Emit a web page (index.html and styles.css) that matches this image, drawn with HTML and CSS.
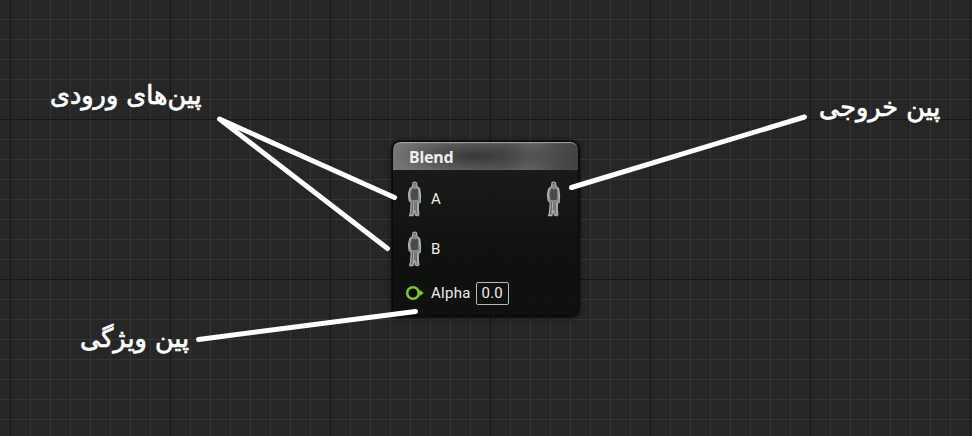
FILE: index.html
```html
<!DOCTYPE html>
<html lang="fa">
<head>
<meta charset="utf-8">
<title>Blend</title>
<link rel="stylesheet" href="styles.css">
</head>
<body>
<main class="graph">
  <svg class="defs" width="0" height="0" aria-hidden="true">
    <symbol id="pose" viewBox="0 0 16 36">
      <path class="body" d="M6 1.5Q8 .3 9.600 1.800L10 5.500 12.700 7.500 13.600 15 13.200 21.500 11.400 22 11.300 28 12 33.500 10.800 34.800 8.200 34 7.800 30 6.600 31.500 5.900 34.600 2.600 34.600 3.500 31 4.200 21.500 2.100 19.500 1.400 13.500 2.800 7.600 5.500 5.600Z"/>
      <path class="torso" d="M5.2 7.5 8 8.5 10.6 7.5 11.2 13 10.8 19H4.6L3.6 13Z"/>
      <path class="fold" d="M6.4 2.7H9M5.6 21 5.2 29 4.5 33M8 21.5 7.5 29M9.7 22 9.5 32"/>
      <path class="shine" d="M5.2 5.9 3 8 2 13.5 3 18.7M10.7 6.4 12.4 9 13 15.5M6.8 21.5 6.2 31M10.5 22 10.3 33"/>
    </symbol>
  </svg>
  <section class="node" dir="ltr">
    <header class="title">Blend</header>
    <div class="pins">
      <div class="row"><svg class="pose"><use href="#pose"/></svg><span>A</span><svg class="pose out"><use href="#pose"/></svg></div>
      <div class="row"><svg class="pose"><use href="#pose"/></svg><span>B</span></div>
      <div class="row value">
        <svg class="ring" viewBox="0 0 20 16"><circle cx="8" cy="8" r="5.8"/><path d="M14.6 4.8 18.7 8 14.6 11.2Z"/></svg>
        <span class="name">Alpha</span><span class="field">0.0</span>
      </div>
    </div>
  </section>
  <svg class="wires" viewBox="0 0 972 436">
    <path d="M394.500 197.500 219.500 119 387.500 248.500M571.500 187.500 804.500 117M198.500 339.500 415.500 311.500"/>
  </svg>
  <div class="note inputs" dir="rtl">پین‌های ورودی</div>
  <div class="note output" dir="rtl">پین خروجی</div>
  <div class="note property" dir="rtl">پین ویژگی</div>
</main>
</body>
</html>
```
FILE: styles.css
```css
* { box-sizing: border-box; }
body { margin: 0; }
.defs { position: absolute; }
.graph {
  position: relative;
  width: 972px;
  height: 436px;
  overflow: hidden;
  background-color: #262626;
  background-image:
    linear-gradient(90deg, #161616 1px, transparent 1px),
    linear-gradient(#161616 1px, transparent 1px),
    linear-gradient(90deg, #353535 1px, transparent 1px),
    linear-gradient(#353535 1px, transparent 1px);
  background-size: 160px 160px, 160px 160px, 20px 20px, 20px 20px;
  background-position: 10px 0, 0 119px, 10px 0, 0 19px;
}
.node {
  position: absolute;
  left: 392px;
  top: 141px;
  width: 187px;
  height: 175px;
  border: 1px solid #080908;
  border-radius: 8px;
  overflow: hidden;
  background: linear-gradient(rgba(27, 29, 27, .92), rgba(13, 16, 13, .94) 65%);
  box-shadow: 0 0 3px 1px rgba(0, 0, 0, .75), 0 3px 5px rgba(0, 0, 0, .4);
  font-family: Roboto, sans-serif;
  color: #eee;
}
.title {
  height: 28px;
  padding-left: 16px;
  border-radius: 7px 7px 0 0;
  background:
    radial-gradient(ellipse 85px 18px at 84px 14px, rgba(48, 48, 48, .85), transparent),
    linear-gradient(100deg, #777 0, #686868 30%, #5c5c5c 60%, #656565 72%, #484848 90%, #414141);
  box-shadow: inset 0 2px 1px -1px #aaa, inset 1px 0 1px #777;
  font: bold 16px/30px "Noto Sans", sans-serif;
  letter-spacing: -.2px;
}
.pins { padding: 4px 14px 0 14px; }
.row { display: flex; align-items: center; height: 50px; font-size: 15px; }
.row > span { margin-left: 8px; }
.pose { width: 16px; height: 36px; }
.out { margin-left: auto; margin-right: 2px; }
.body { fill: #858785; stroke: #b0b2b0; stroke-width: 1.1; }
.torso { fill: #484b48; }
.fold { fill: none; stroke: #606460; stroke-width: 1; }
.shine { fill: none; stroke: #c0c2c0; stroke-width: .7; }
.value { height: 38px; }
.ring { width: 20px; height: 16px; margin-left: -2px; }
.ring circle { fill: #080b06; stroke: #7fcb2c; stroke-width: 2.6; }
.ring path { fill: #7fcb2c; }
.value .name { margin-left: 6px; letter-spacing: .3px; }
.value .field {
  width: 33px;
  height: 23px;
  margin-left: 5px;
  border: 1px solid #bbb;
  border-radius: 2px;
  line-height: 21px;
  text-align: center;
  letter-spacing: .2px;
}
.wires { position: absolute; inset: 0; width: 972px; height: 436px; }
.wires path { fill: none; stroke: #fff; stroke-width: 5; stroke-linecap: round; stroke-linejoin: round; }
.note {
  position: absolute;
  color: #fff;
  font: 26px/36px "DejaVu Sans", sans-serif;
  -webkit-text-stroke: .7px #fff;
  white-space: nowrap;
  transform-origin: left center;
  transform: scaleX(.98);
}
.inputs { left: 50px; top: 77px; }
.output { left: 819px; top: 89px; }
.property { left: 80px; top: 320px; }
```
